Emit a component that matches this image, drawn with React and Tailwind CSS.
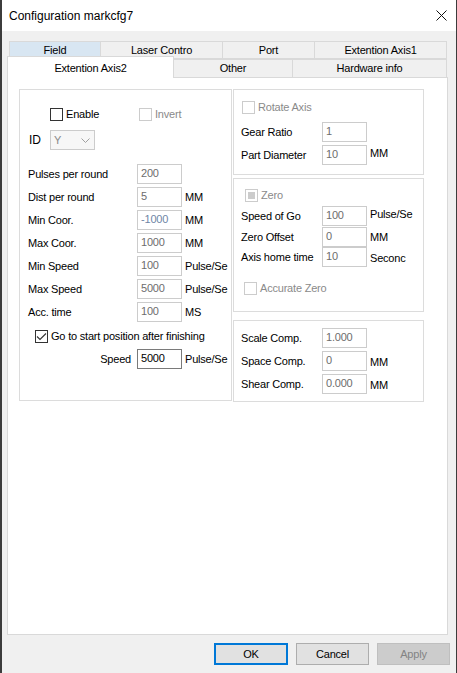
import React from 'react';

function Box({ state = 'off', disabled = false }) {
  return (
    <span
      className={`flex h-[13px] w-[13px] shrink-0 items-center justify-center border bg-white ${
        disabled ? 'border-[#cccccc]' : 'border-[#333333]'
      }`}
    >
      {state === 'on' && (
        <svg width="11" height="11" viewBox="0 0 11 11">
          <path d="M1 5.5 L4 8.5 L10 2.5" fill="none" stroke="#333333" strokeWidth="1.1" />
        </svg>
      )}
      {state === 'mixed' && <span className="h-[7px] w-[7px] bg-[#cccccc]" />}
    </span>
  );
}

function Input({ value, tone = 'grey' }) {
  const cls =
    tone === 'dark'
      ? 'border-[#7a7a7a] text-black'
      : tone === 'blue'
      ? 'border-[#cccccc] text-[#6f86a6]'
      : 'border-[#cccccc] text-[#6d6d6d]';
  return (
    <div className={`flex h-[20px] w-[45px] shrink-0 items-center border bg-white pb-[1px] pl-[3px] ${cls}`}>
      {value}
    </div>
  );
}

function LeftRow({ label, value, unit, tone }) {
  return (
    <div className="flex h-[20px] items-center pl-[8px]">
      <span className="w-[109px] shrink-0">{label}</span>
      <Input value={value} tone={tone} />
      {unit && <span className="ml-[3px] whitespace-nowrap">{unit}</span>}
    </div>
  );
}

function RightRow({ label, value, unit, className = '', unitClass = '' }) {
  return (
    <div className={`flex h-[20px] items-center pl-[7px] ${className}`}>
      <span className="w-[81px] shrink-0 whitespace-nowrap">{label}</span>
      <Input value={value} />
      {unit && <span className={`ml-[3px] whitespace-nowrap ${unitClass}`}>{unit}</span>}
    </div>
  );
}

export default function App() {
  return (
    <div className="flex h-[673px] w-[457px] font-['Liberation_Sans',Arial,sans-serif] text-[11px] tracking-[-0.2px] text-black">
      <div className="w-[2px] shrink-0 bg-[#3c3c3c]" />
      <div className="flex w-[454px] flex-col bg-[#f0f0f0]">
        {/* title bar */}
        <div className="flex h-[31px] shrink-0 items-center justify-between bg-white pl-[7px] pr-[9px]">
          <span className="text-[12px] tracking-normal">Configuration markcfg7</span>
          <svg width="11" height="11" viewBox="0 0 11 11">
            <path d="M0.5 0.5 L10.5 10.5 M10.5 0.5 L0.5 10.5" stroke="#111" strokeWidth="1" />
          </svg>
        </div>

        <div className="flex flex-col pl-[5px] pt-[10px]">
          {/* tab row 1 */}
          <div className="ml-[2px] flex h-[18px]">
            <div className="flex w-[92px] items-center justify-center border border-[#d9d9d9] bg-[#d8e6f2]">Field</div>
            <div className="flex w-[122px] items-center justify-center border-y border-r border-[#d9d9d9]">Laser Contro</div>
            <div className="flex w-[92px] items-center justify-center border-y border-r border-[#d9d9d9]">Port</div>
            <div className="flex w-[132px] items-center justify-center border-y border-r border-[#d9d9d9]">Extention Axis1</div>
          </div>
          {/* tab row 2 */}
          <div className="flex h-[18px] items-end">
            <div className="relative z-10 -mb-[1px] flex h-[22px] w-[167px] items-start justify-center border-x border-t border-[#d9d9d9] bg-white pt-[3px]">
              Extention Axis2
            </div>
            <div className="flex h-[18px] w-[119px] items-center justify-center border-r border-t border-[#d9d9d9]">Other</div>
            <div className="flex h-[18px] w-[154px] items-center justify-center border-r border-t border-[#d9d9d9]">Hardware info</div>
          </div>

          {/* panel */}
          <div className="flex h-[558px] w-[441px] border border-[#d9d9d9] bg-white pl-[11px] pt-[11px]">
            {/* left group */}
            <div className="flex h-[312px] w-[213px] shrink-0 flex-col border border-[#dcdcdc]">
              <div className="mt-[18px] flex h-[13px] items-center pl-[30px]">
                <div className="flex w-[89px] items-center gap-[3px]">
                  <Box />
                  <span>Enable</span>
                </div>
                <div className="flex items-center gap-[3px] text-[#8a8a8a]">
                  <Box disabled />
                  <span>Invert</span>
                </div>
              </div>
              <div className="mt-[9px] flex h-[20px] items-center pl-[9px]">
                <span className="w-[21px] shrink-0 text-[12px]">ID</span>
                <div className="flex h-[20px] w-[45px] items-center justify-between border border-[#cccccc] bg-[#f7f7f7] pl-[3px] pr-[4px] text-[#8a8a8a]">
                  <span>Y</span>
                  <svg width="9" height="5" viewBox="0 0 9 5">
                    <path d="M0.5 0.5 L4.5 4.5 L8.5 0.5" fill="none" stroke="#a0a0a0" strokeWidth="1" />
                  </svg>
                </div>
              </div>
              <div className="mt-[14px] flex flex-col gap-[3px]">
                <LeftRow label="Pulses per round" value="200" />
                <LeftRow label="Dist per round" value="5" unit="MM" />
                <LeftRow label="Min Coor." value="-1000" unit="MM" tone="blue" />
                <LeftRow label="Max Coor." value="1000" unit="MM" />
                <LeftRow label="Min Speed" value="100" unit="Pulse/Se" />
                <LeftRow label="Max Speed" value="5000" unit="Pulse/Se" />
                <LeftRow label="Acc. time" value="100" unit="MS" />
              </div>
              <div className="mt-[8px] flex h-[13px] items-center gap-[3px] pl-[15px]">
                <Box state="on" />
                <span>Go to start position after finishing</span>
              </div>
              <div className="mt-[6px] flex h-[20px] items-center">
                <span className="w-[117px] shrink-0 pr-[6px] text-right">Speed</span>
                <Input value="5000" tone="dark" />
                <span className="ml-[3px]">Pulse/Se</span>
              </div>
            </div>

            {/* right column */}
            <div className="ml-[1px] flex w-[191px] shrink-0 flex-col">
              <div className="flex h-[86px] flex-col border border-[#dcdcdc]">
                <div className="mt-[11px] flex h-[13px] items-center gap-[3px] pl-[8px] text-[#8a8a8a]">
                  <Box disabled />
                  <span>Rotate Axis</span>
                </div>
                <RightRow label="Gear Ratio" value="1" className="mt-[8px]" />
                <RightRow label="Part Diameter" value="10" unit="MM" className="mt-[3px]" unitClass="mb-[4px]" />
              </div>

              <div className="mt-[3px] flex h-[134px] flex-col border border-[#dcdcdc]">
                <div className="mt-[10px] flex h-[13px] items-center gap-[3px] pl-[11px] text-[#8a8a8a]">
                  <Box state="mixed" disabled />
                  <span>Zero</span>
                </div>
                <RightRow label="Speed of Go" value="100" unit="Pulse/Se" className="mt-[4px]" unitClass="mb-[3px]" />
                <RightRow label="Zero Offset" value="0" unit="MM" className="mt-[1px]" />
                <RightRow label="Axis home time" value="10" unit="Seconc" unitClass="mt-[3px]" />
                <div className="mt-[15px] flex h-[13px] items-center gap-[3px] pl-[10px] text-[#8a8a8a]">
                  <Box disabled />
                  <span>Accurate Zero</span>
                </div>
              </div>

              <div className="mt-[8px] flex h-[82px] flex-col border border-[#dcdcdc]">
                <RightRow label="Scale Comp." value="1.000" className="mt-[7px]" />
                <RightRow label="Space Comp." value="0" unit="MM" className="mt-[3px]" unitClass="mt-[3px]" />
                <RightRow label="Shear Comp." value="0.000" unit="MM" className="mt-[3px]" unitClass="mt-[3px]" />
              </div>
            </div>
          </div>
        </div>

        {/* buttons */}
        <div className="mt-[8px] flex justify-end gap-[8px] pr-[6px] text-[11px]">
          <button className="flex h-[22px] w-[74px] items-center justify-center border-2 border-[#0078d7] bg-[#e1e1e1]">OK</button>
          <button className="flex h-[22px] w-[73px] items-center justify-center border border-[#adadad] bg-[#e1e1e1]">Cancel</button>
          <button className="flex h-[22px] w-[73px] items-center justify-center border border-[#bfbfbf] bg-[#cccccc] text-[#838383]">Apply</button>
        </div>
      </div>
      <div className="w-[1px] shrink-0 bg-[#3c3c3c]" />
    </div>
  );
}
